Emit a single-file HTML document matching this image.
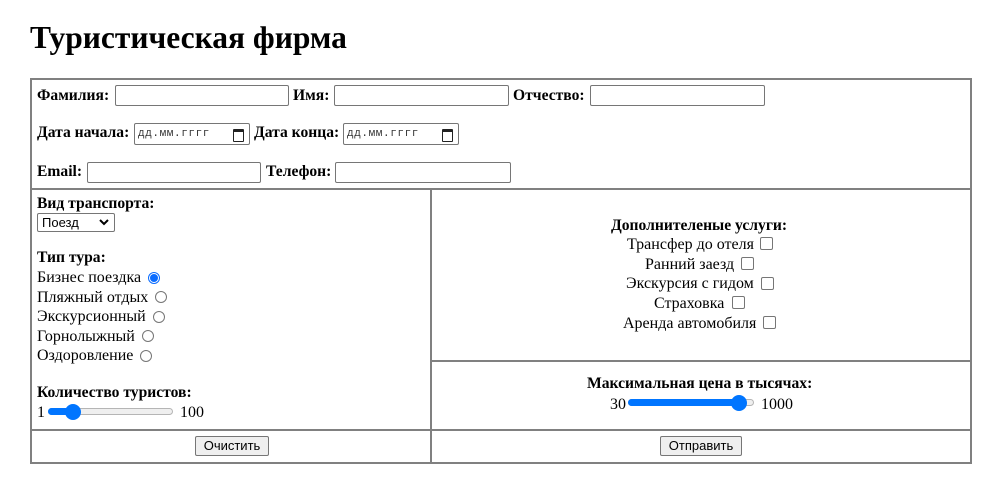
<!DOCTYPE html>
<html><head><meta charset="utf-8"><style>
body{margin:0;background:#fff;width:1000px;height:492px;position:relative;overflow:hidden;font-family:"Liberation Serif","DejaVu Serif",serif;font-size:16px;color:#000}
.a{position:absolute;white-space:nowrap;line-height:18px}
.b{font-weight:bold;font-size:15.6px}
.l{position:absolute;background:#808080}
.in{position:absolute;border:1px solid #767676;border-radius:2px;background:#fff;box-sizing:border-box}
.dt{font-family:"Liberation Mono","DejaVu Sans Mono",monospace;font-size:11px;color:#333;line-height:20px;padding-left:3px;letter-spacing:0.6px}
.rad{position:absolute;width:12px;height:12px;border:1px solid #767676;border-radius:50%;box-sizing:border-box;background:#fff}
.chk{position:absolute;width:13px;height:13px;border:1px solid #767676;border-radius:2px;box-sizing:border-box;background:#fff}
.btn{position:absolute;border:1px solid #767676;border-radius:2px;background:#efefef;font-family:"Liberation Sans",sans-serif;font-size:13px;text-align:center;line-height:18px;box-sizing:border-box}
</style></head><body>
<div class="a" style="left:30px;top:18px;font-size:31.5px;line-height:40px;font-weight:bold">Туристическая фирма</div>

<div class="l" style="left:30px;top:78px;width:942px;height:2px"></div>
<div class="l" style="left:30px;top:462px;width:942px;height:2px"></div>
<div class="l" style="left:30px;top:78px;width:2px;height:386px"></div>
<div class="l" style="left:970px;top:78px;width:2px;height:386px"></div>
<div class="l" style="left:30px;top:188px;width:942px;height:2px"></div>
<div class="l" style="left:30px;top:429px;width:942px;height:2px"></div>
<div class="l" style="left:430px;top:188px;width:2px;height:276px"></div>
<div class="l" style="left:430px;top:360px;width:542px;height:2px"></div>

<div class="a b" style="left:37px;top:87px">Фамилия:</div>
<div class="in" style="left:115px;top:85px;width:174px;height:21px"></div>
<div class="a b" style="left:293px;top:87px">Имя:</div>
<div class="in" style="left:334px;top:85px;width:175px;height:21px"></div>
<div class="a b" style="left:513px;top:87px">Отчество:</div>
<div class="in" style="left:590px;top:85px;width:175px;height:21px"></div>

<div class="a b" style="left:37px;top:124px">Дата начала:</div>
<div class="in dt" style="left:134px;top:123px;width:116px;height:22px">дд.мм.гггг<span style="position:absolute;right:5px;top:5px;width:9px;height:9px;border:1.5px solid #222;border-top-width:3px;border-radius:1px"></span></div>
<div class="a b" style="left:254px;top:124px">Дата конца:</div>
<div class="in dt" style="left:343px;top:123px;width:116px;height:22px">дд.мм.гггг<span style="position:absolute;right:5px;top:5px;width:9px;height:9px;border:1.5px solid #222;border-top-width:3px;border-radius:1px"></span></div>

<div class="a b" style="left:37px;top:163px">Email:</div>
<div class="in" style="left:87px;top:162px;width:174px;height:21px"></div>
<div class="a b" style="left:266px;top:163px">Телефон:</div>
<div class="in" style="left:335px;top:162px;width:176px;height:21px"></div>

<div class="a b" style="left:37px;top:195px">Вид транспорта:</div>
<div class="in" style="left:37px;top:213px;width:78px;height:19px;font-family:'Liberation Sans',sans-serif;font-size:13px;line-height:17px;padding-left:4px">Поезд<svg style="position:absolute;right:5px;top:5px" width="10" height="7" viewBox="0 0 10 7"><path d="M1 1l4 4 4-4" stroke="#000" stroke-width="2" fill="none"/></svg></div>
<div class="a b" style="left:37px;top:249px">Тип тура:</div>
<div class="a" style="left:37px;top:269px">Бизнес поездка</div>
<div class="rad" style="left:148px;top:272px;border:1px solid #0a6cff"><div style="position:absolute;left:1px;top:1px;width:8px;height:8px;border-radius:50%;background:#0a6cff"></div></div>
<div class="a" style="left:37px;top:289px">Пляжный отдых</div>
<div class="rad" style="left:155px;top:291px"></div>
<div class="a" style="left:37px;top:308px">Экскурсионный</div>
<div class="rad" style="left:153px;top:311px"></div>
<div class="a" style="left:37px;top:328px">Горнолыжный</div>
<div class="rad" style="left:142px;top:330px"></div>
<div class="a" style="left:37px;top:347px">Оздоровление</div>
<div class="rad" style="left:140px;top:350px"></div>
<div class="a b" style="left:37px;top:384px">Количество туристов:</div>
<div class="a" style="left:37px;top:404px">1</div>
<div style="position:absolute;left:48px;top:408px;width:125px;height:7px;border:1px solid #b5b5b5;border-radius:4px;background:#efefef;box-sizing:border-box"></div>
<div style="position:absolute;left:48px;top:408px;width:25px;height:7px;border-radius:4px;background:#0075ff"></div>
<div style="position:absolute;left:65px;top:404px;width:16px;height:16px;border-radius:50%;background:#0075ff"></div>
<div class="a" style="left:180px;top:404px">100</div>

<div class="a b" style="left:611px;top:217px">Дополнителеные услуги:</div>
<div class="a" style="left:627px;top:236px">Трансфер до отеля</div>
<div class="chk" style="left:760px;top:237px"></div>
<div class="a" style="left:645px;top:256px">Ранний заезд</div>
<div class="chk" style="left:741px;top:257px"></div>
<div class="a" style="left:626px;top:275px">Экскурсия с гидом</div>
<div class="chk" style="left:761px;top:277px"></div>
<div class="a" style="left:654px;top:295px">Страховка</div>
<div class="chk" style="left:732px;top:296px"></div>
<div class="a" style="left:623px;top:315px">Аренда автомобиля</div>
<div class="chk" style="left:763px;top:316px"></div>

<div class="a b" style="left:587px;top:375px">Максимальная цена в тысячах:</div>
<div class="a" style="left:610px;top:396px">30</div>
<div style="position:absolute;left:628px;top:399px;width:126px;height:7px;border:1px solid #b5b5b5;border-radius:4px;background:#efefef;box-sizing:border-box"></div>
<div style="position:absolute;left:628px;top:399px;width:112px;height:7px;border-radius:4px;background:#0075ff"></div>
<div style="position:absolute;left:731px;top:395px;width:16px;height:16px;border-radius:50%;background:#0075ff"></div>
<div class="a" style="left:761px;top:396px">1000</div>

<div class="btn" style="left:195px;top:436px;width:74px;height:20px">Очистить</div>
<div class="btn" style="left:660px;top:436px;width:82px;height:20px">Отправить</div>
</body></html>
